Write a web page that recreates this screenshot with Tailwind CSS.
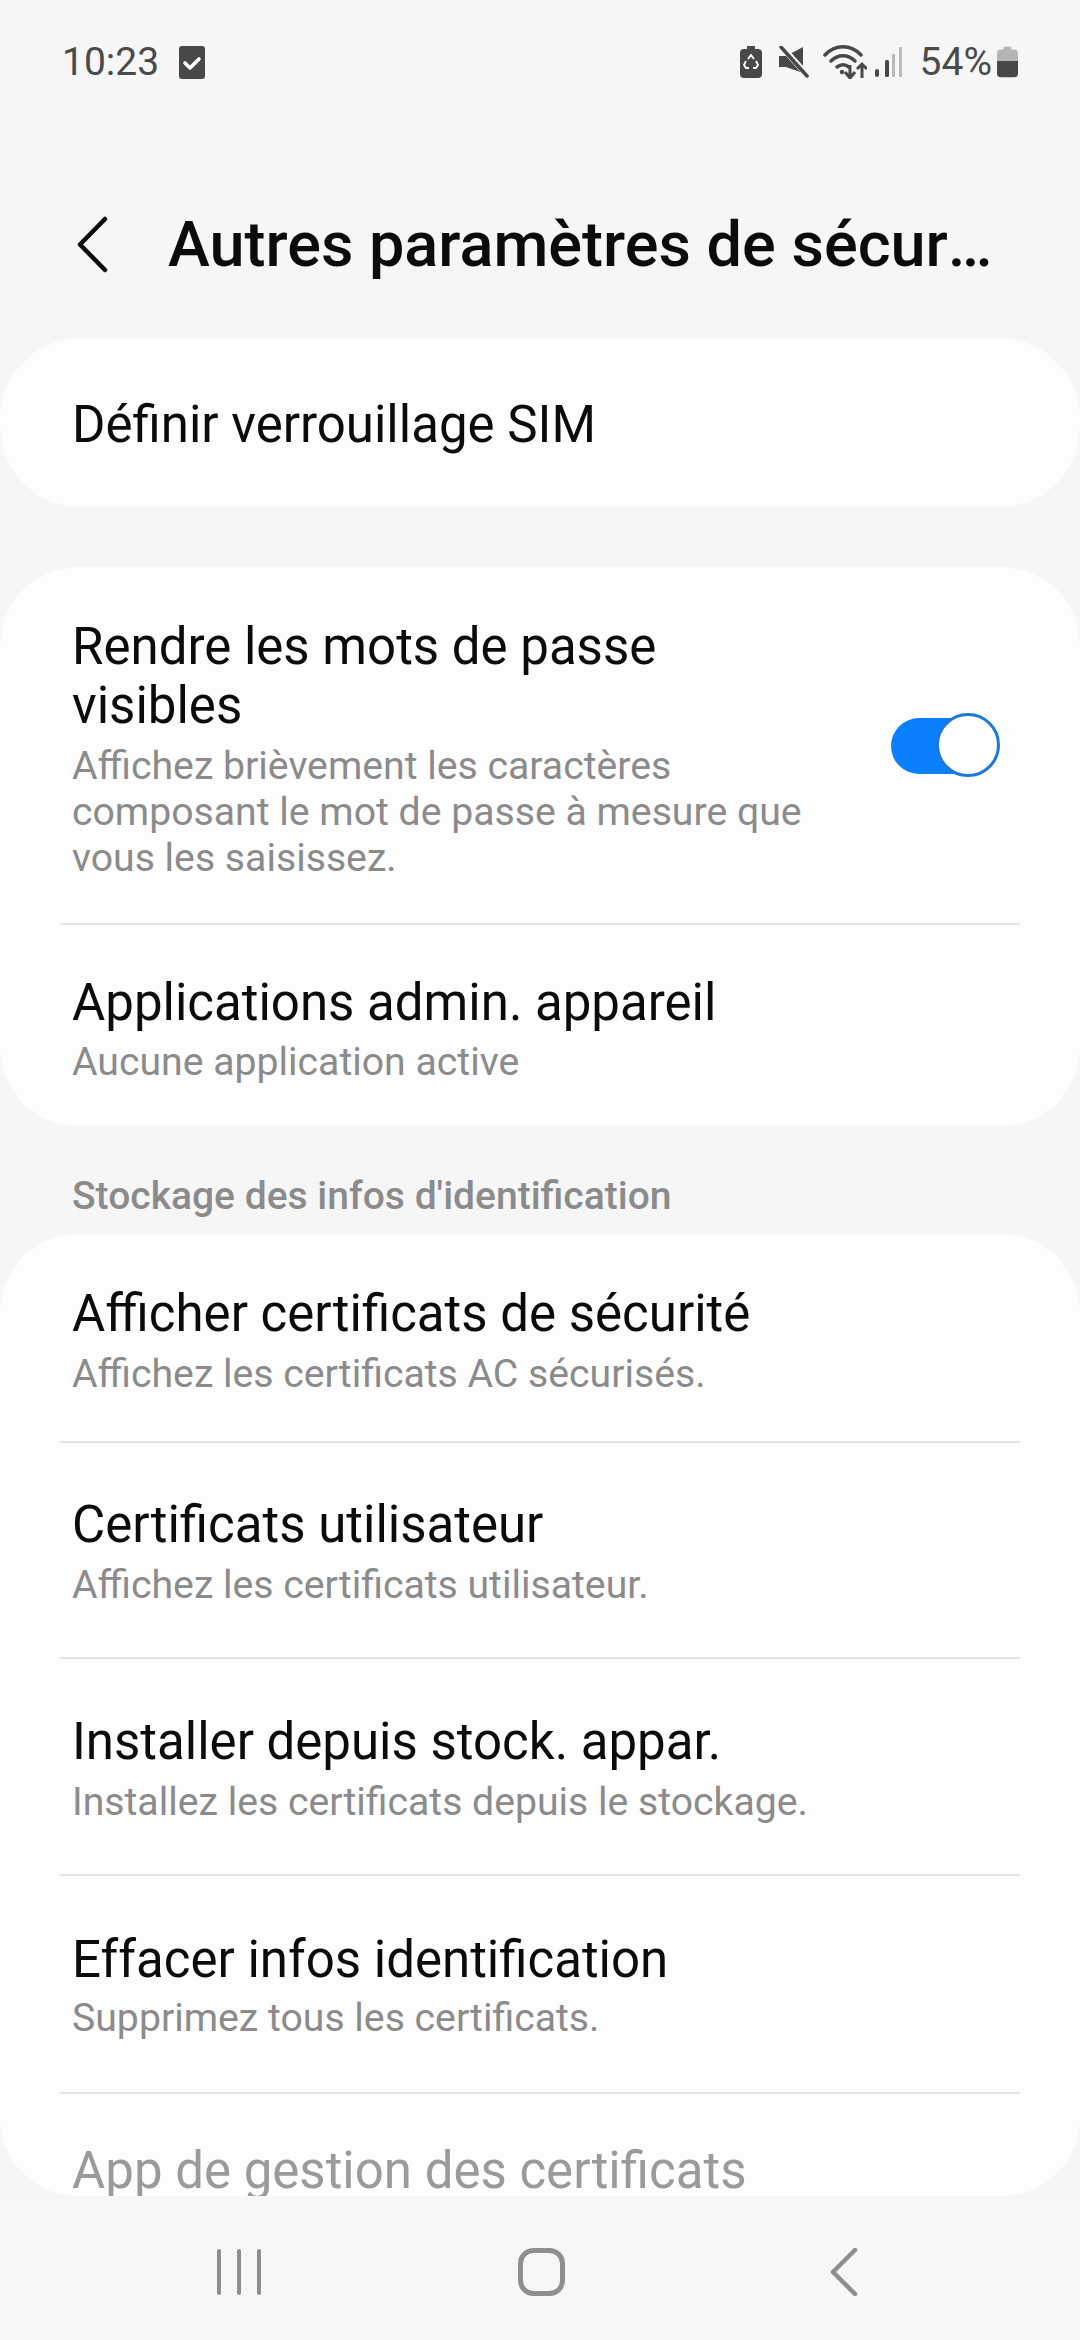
<!DOCTYPE html>
<html><head><meta charset="utf-8"><script src="https://cdn.jsdelivr.net/npm/@tailwindcss/browser@4"></script></head>
<body class="m-0">
<div class="w-[1080px] h-[2340px] bg-[#f6f6f6] overflow-hidden flex flex-col font-['Roboto',sans-serif] text-[#0b0b0b]">
  <!-- status bar -->
  <div class="h-[124px] flex items-center justify-between pl-[62px] pr-[62px] text-[#4a4a4a] shrink-0">
    <div class="flex items-center gap-[20px]">
      <span class="text-[39px] leading-none">10:23</span>
      <svg width="26" height="33" viewBox="0 0 26 33"><rect width="26" height="33" rx="3" fill="#484848"/><path d="M6 17l5 5 9-9" fill="none" stroke="#fff" stroke-width="3.6" stroke-linecap="round" stroke-linejoin="round"/></svg>
    </div>
    <div class="flex items-center">
      <svg width="22" height="32" viewBox="0 0 22 32" class="mr-[17px]"><path d="M7 0h8v3h3a4 4 0 0 1 4 4v21a4 4 0 0 1-4 4H4a4 4 0 0 1-4-4V7a4 4 0 0 1 4-4h3z" fill="#484848"/><path d="M8 12l3-4 3 4M16 14l2 4-2 3h-3M9 21H6l-2-3 2-4" fill="none" stroke="#fff" stroke-width="1.8" transform="translate(0 1)"/></svg>
      <svg width="30" height="32" viewBox="0 0 30 32" class="mr-[14px]"><path d="M0 10h7L24 1v26L7 21H0z" fill="#484848"/><path d="M3 1l26 29" stroke="#f6f6f6" stroke-width="6"/><path d="M2 1l26 29" stroke="#484848" stroke-width="3.500" stroke-linecap="round"/></svg>
      <svg width="44" height="34" viewBox="0 0 44 34" class="mr-[8px]"><g fill="none" stroke="#484848" stroke-width="3.500" stroke-linecap="round"><path d="M2 10c10-11 26-11 36 0"/><path d="M8 16c7-7 17-7 24 0"/><path d="M14 22c4-3 8-3 12 0"/></g><circle cx="19" cy="27" r="2.200" fill="#484848"/><g fill="none" stroke="#484848" stroke-width="3"><path d="M27 20v13M22 27l5 6 5-6"/><path d="M39 33V19M34 24l5-5 5 5"/></g></svg>
      <svg width="27" height="30" viewBox="0 0 27 30" class="mr-[18px]"><rect x="0" y="22" width="4" height="8" rx="2" fill="#484848"/><rect x="10" y="13" width="4" height="17" rx="1.500" fill="#484848"/><rect x="17" y="7" width="3" height="23" fill="#b9b9b9" rx="1"/><rect x="24" y="0" width="3" height="30" fill="#b9b9b9" rx="1"/></svg>
      <span class="text-[39px] leading-none mr-[5px]">54%</span>
      <svg width="21" height="32" viewBox="0 0 22 32"><path d="M7 0h8v3h3a4 4 0 0 1 4 4v8H0V7a4 4 0 0 1 4-4h3z" fill="#b4b4b4"/><path d="M0 15h22v13a4 4 0 0 1-4 4H4a4 4 0 0 1-4-4z" fill="#484848"/></svg>
    </div>
  </div>
  <!-- app bar -->
  <div class="h-[214px] shrink-0 flex items-center pt-[28px]">
    <svg width="32" height="58" viewBox="0 0 32 58" class="ml-[77px] shrink-0"><path d="M28 3L3 28.500 28 54" fill="none" stroke="#0b0b0b" stroke-width="4.500" stroke-linecap="round" stroke-linejoin="round"/></svg>
    <h1 class="ml-[59px] w-[832px] truncate text-[63px] leading-[72px] font-medium">Autres paramètres de sécurité</h1>
  </div>
  <!-- SIM card -->
  <div class="h-[169px] shrink-0 bg-[#fdfdfd] rounded-[80px] flex items-center px-[72px] pt-[5px] text-[51px]">Définir verrouillage SIM</div>
  <!-- card 2 -->
  <div class="mt-[60px] h-[559px] shrink-0 bg-[#fdfdfd] rounded-[78px] flex flex-col">
    <div class="h-[356px] flex items-center pl-[72px] pr-[80px] pt-[8px]">
      <div class="w-[780px] shrink-0">
        <div class="text-[51px] leading-[59px]">Rendre les mots de passe<br>visibles</div>
        <div class="text-[39.200px] leading-[46px] text-[#8b8b8b] mt-[8px]">Affichez brièvement les caractères<br>composant le mot de passe à mesure que<br>vous les saisissez.</div>
      </div>
      <div class="relative w-[109px] h-[64px] ml-auto mb-[8px]">
        <div class="absolute left-0 top-[5px] w-[90px] h-[56px] rounded-full bg-[#0a80ff]"></div>
        <div class="absolute right-0 top-0 w-[64px] h-[64px] rounded-full bg-white border-[3px] border-[#1f78d8]"></div>
      </div>
    </div>
    <div class="mx-[60px] h-[2px] bg-[#e4e4e4] shrink-0"></div>
    <div class="flex-1 flex flex-col justify-center px-[72px] pt-[7px]">
      <div class="text-[51px] leading-[59px]">Applications admin. appareil</div>
      <div class="text-[39.200px] leading-[46px] text-[#8b8b8b] mt-[7px]">Aucune application active</div>
    </div>
  </div>
  <!-- section header -->
  <div class="h-[108px] shrink-0 flex items-center px-[72px] pt-[32px] text-[39px] font-medium text-[#8b8b8b]">Stockage des infos d'identification</div>
  <!-- card 3 -->
  <div class="h-[962px] shrink-0 bg-[#fdfdfd] rounded-[78px] overflow-hidden flex flex-col">
    <div class="h-[207px] shrink-0 flex flex-col justify-center px-[72px] pt-[6px]">
      <div class="text-[51px] leading-[59px]">Afficher certificats de sécurité</div>
      <div class="text-[39.200px] leading-[46px] text-[#8b8b8b] mt-[8px]">Affichez les certificats AC sécurisés.</div>
    </div>
    <div class="mx-[60px] h-[2px] bg-[#e4e4e4] shrink-0"></div>
    <div class="h-[214px] shrink-0 flex flex-col justify-center px-[72px] pt-[2px]">
      <div class="text-[51px] leading-[59px]">Certificats utilisateur</div>
      <div class="text-[39.200px] leading-[46px] text-[#8b8b8b] mt-[8px]">Affichez les certificats utilisateur.</div>
    </div>
    <div class="mx-[60px] h-[2px] bg-[#e4e4e4] shrink-0"></div>
    <div class="h-[215px] shrink-0 flex flex-col justify-center px-[72px] pt-[4px]">
      <div class="text-[51px] leading-[59px]">Installer depuis stock. appar.</div>
      <div class="text-[39.200px] leading-[46px] text-[#8b8b8b] mt-[8px]">Installez les certificats depuis le stockage.</div>
    </div>
    <div class="mx-[60px] h-[2px] bg-[#e4e4e4] shrink-0"></div>
    <div class="h-[216px] shrink-0 flex flex-col justify-center px-[72px] pt-[3px]">
      <div class="text-[51px] leading-[59px]">Effacer infos identification</div>
      <div class="text-[39.200px] leading-[46px] text-[#8b8b8b] mt-[6px]">Supprimez tous les certificats.</div>
    </div>
    <div class="mx-[60px] h-[2px] bg-[#e4e4e4] shrink-0"></div>
    <div class="px-[72px] pt-[47px] text-[51px] leading-[59px] text-[#9a9a9a]">App de gestion des certificats</div>
  </div>
  <!-- nav bar -->
  <div class="flex-1 bg-[#f7f7f7] flex items-start pt-[52px]">
    <svg width="44" height="48" viewBox="0 0 44 48" class="ml-[217px]"><g stroke="#8e8e8e" stroke-width="4" stroke-linecap="round"><path d="M2 3v42M22 3v42M42 3v42"/></g></svg>
    <svg width="47" height="48" viewBox="0 0 47 48" class="ml-[257px]"><rect x="2.500" y="2.500" width="42" height="43" rx="13" fill="none" stroke="#8e8e8e" stroke-width="5"/></svg>
    <svg width="28" height="48" viewBox="0 0 28 48" class="ml-[265px]"><path d="M25 2L3 24 25 46" fill="none" stroke="#8e8e8e" stroke-width="4.500" stroke-linecap="round" stroke-linejoin="round"/></svg>
  </div>
</div>
</body></html>
